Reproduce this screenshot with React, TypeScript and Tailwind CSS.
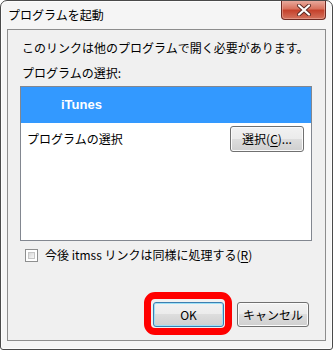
import React from "react";

const jp = { fontFamily: '"Noto Sans CJK JP", "Noto Sans", sans-serif' };

function Btn({
  children,
  className = "",
  def = false,
}: {
  children: React.ReactNode;
  className?: string;
  def?: boolean;
}) {
  return (
    <div
      className={
        "flex items-center justify-center rounded-[3px] border text-[12px] leading-[16px] text-black bg-[linear-gradient(#f2f2f2,#ebebeb_50%,#dddddd_50%,#cfcfcf)] " +
        (def
          ? "border-[#3c7fb1] shadow-[inset_0_0_0_1px_#9ee0f6]"
          : "border-[#707070] shadow-[inset_0_0_0_1px_#fbfbfb]") +
        " " +
        className
      }
      style={jp}
    >
      {children}
    </div>
  );
}

export default function App() {
  return (
    <div
      className="w-[333px] h-[350px] flex flex-col border border-[#4a4a4a] rounded-t-[7px] rounded-b-[3px] bg-[#f5f5f5] shadow-[inset_0_0_0_1px_#fdfdfd] overflow-hidden"
      style={jp}
    >
      {/* title bar */}
      <div className="h-[28px] flex items-start justify-between pl-[7px] shrink-0">
        <div className="pt-[6px] text-[12px] leading-[16px] text-black">プログラムを起動</div>
        <div className="mr-[6px] mt-[-1px] w-[45px] h-[20px] rounded-b-[4px] border border-t-0 border-[#6e2a22] bg-[linear-gradient(#eab0a4,#d9735f_45%,#c5422c_55%,#d4735e)] shadow-[inset_0_0_0_1px_#f0b8ac80] flex items-center justify-center">
          <svg width="16" height="12" viewBox="0 0 16 12">
            <path d="M3 1.5 L13 10.5 M13 1.5 L3 10.5" stroke="#5a2a24" strokeWidth="4" strokeLinecap="round" fill="none" />
            <path d="M3 1.5 L13 10.5 M13 1.5 L3 10.5" stroke="#ffffff" strokeWidth="2.2" strokeLinecap="round" fill="none" />
          </svg>
        </div>
      </div>

      {/* client area */}
      <div className="mx-[6px] mb-[8px] flex-1 flex flex-col border border-[#8d8d8d] bg-[#f0f0f0] text-black">
        <div className="mt-[10px] ml-[14px] text-[12px] leading-[16px]">
          このリンクは他のプログラムで開く必要があります。
        </div>
        <div className="mt-[9px] ml-[14px] text-[12px] leading-[16px]">プログラムの選択:</div>

        <div className="mt-[5px] ml-[12px] w-[292px] h-[155px] border border-[#828790] bg-white flex flex-col">
          <div className="h-[36px] bg-[#3399ff] flex items-center pl-[40px]">
            <span
              className="text-white font-bold text-[13px] leading-[16px]"
              style={{ fontFamily: '"Liberation Sans", Arial, sans-serif' }}
            >
              iTunes
            </span>
          </div>
          <div className="flex items-center justify-between pl-[6px] pr-[7px] pt-[3px]">
            <span className="text-[12px] leading-[16px]">プログラムの選択</span>
            <Btn className="w-[74px] h-[26px]">
              選択(<span className="underline underline-offset-2">C</span>)...
            </Btn>
          </div>
        </div>

        <div className="mt-[6px] ml-[17px] flex items-center gap-[7px]">
          <div className="w-[13px] h-[13px] border border-[#8e8f8f] bg-white p-[2px]">
            <div className="w-full h-full border border-[#c6c6c6] bg-[linear-gradient(135deg,#d8d8d8,#f7f7f7)]" />
          </div>
          <span className="text-[12px] leading-[16px]">
            今後 itmss リンクは同様に処理する(<span className="underline underline-offset-2">R</span>)
          </span>
        </div>

        <div className="mt-auto mb-[13px] mr-[16px] flex justify-end gap-[13px]">
          <div className="relative">
            <Btn def className="w-[71px] h-[25px]">
              OK
            </Btn>
            <div className="absolute left-[-9px] top-[-10px] right-[-8px] bottom-[-8px] border-[7px] border-[#ff0000] rounded-[11px]" />
          </div>
          <Btn className="w-[72px] h-[25px]">キャンセル</Btn>
        </div>
      </div>
    </div>
  );
}
